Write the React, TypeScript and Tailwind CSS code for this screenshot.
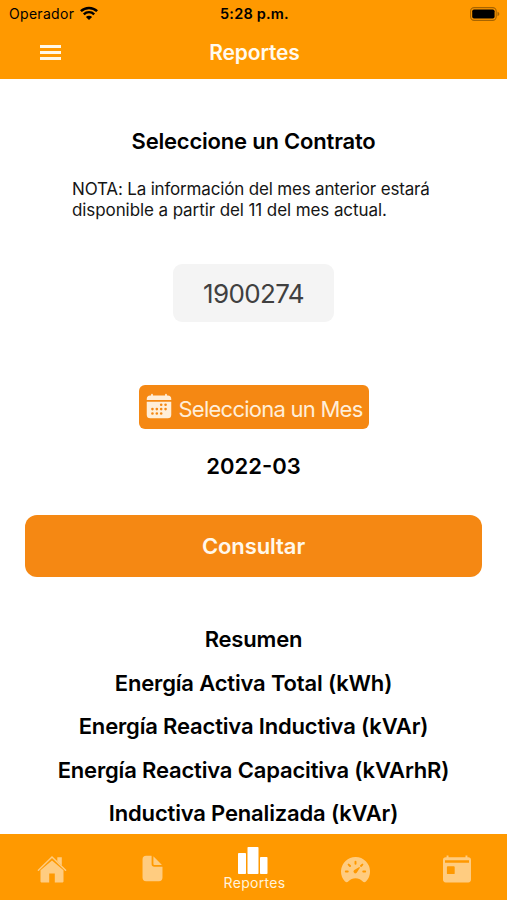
import { IoCalendar, IoDocument, IoSpeedometer } from "react-icons/io5";

// Rows listed under the "Resumen" heading
const summaryItems = [
  "Energía Activa Total (kWh)",
  "Energía Reactiva Inductiva (kVAr)",
  "Energía Reactiva Capacitiva (kVArhR)",
  "Inductiva Penalizada (kVAr)",
];

function WifiIcon() {
  return (
    <svg viewBox="0 0 20 15" className="ml-[5px] h-[15px] w-5" fill="none">
      <path d="M1.9 5.2a11.6 11.6 0 0 1 16.2 0" stroke="#000" strokeWidth="2.5" />
      <path d="M4.8 8.3a7.4 7.4 0 0 1 10.4 0" stroke="#000" strokeWidth="2.4" />
      <path d="M10 14.1 6.9 11a4.4 4.4 0 0 1 6.2 0z" fill="#000" />
    </svg>
  );
}

function BatteryIcon() {
  return (
    <svg viewBox="0 0 30 14" className="h-3.5 w-[30px]" fill="none">
      <rect x="0.6" y="0.6" width="25.6" height="12.8" rx="3.6" stroke="#a76400" strokeWidth="1.1" />
      <rect x="2.2" y="2.4" width="22.4" height="9.2" rx="1.8" fill="#000" />
      <path d="M27.5 4.8c1.1.4 1.8 1.2 1.8 2.2s-.7 1.8-1.8 2.2z" fill="#a76400" />
    </svg>
  );
}

// House with a separate roof line, a chimney and an open door
function HomeIcon() {
  return (
    <svg viewBox="0 0 30 28" className="h-7 w-[30px]" fill="currentColor">
      <path d="M3.5 15.2 15 5.4l11.5 9.8v11.4a.8.8 0 0 1-.8.8h-7.9v-8.8h-5.6v8.8H4.3a.8.8 0 0 1-.8-.8z" />
      <path d="M1.4 15.2 15 2l13.6 13.2" fill="none" stroke="currentColor" strokeWidth="1.5" strokeLinecap="round" />
      <path d="M20.3 2.2h4.5v8.2l-4.5-4.2z" />
    </svg>
  );
}

function PodiumIcon() {
  return (
    <svg viewBox="0 0 30 27" className="h-[27px] w-[30px]" fill="currentColor">
      <rect x="0" y="6" width="8" height="21" rx="0.8" />
      <rect x="9.5" y="0" width="11" height="27" rx="0.8" />
      <rect x="22" y="10" width="7.5" height="17" rx="0.8" />
    </svg>
  );
}

function TodayIcon() {
  return (
    <svg viewBox="0 0 30 28" className="h-7 w-[30px]" fill="currentColor">
      <path
        fillRule="evenodd"
        d="M4.6.6h1.9v1.6h17V.6h1.9v1.6h.8A2.8 2.8 0 0 1 29 5v19.6a2.8 2.8 0 0 1-2.8 2.8H3.8A2.8 2.8 0 0 1 1 24.6V5a2.8 2.8 0 0 1 2.8-2.8h.8zM3 5.3v2.4h24V5.3zM5.8 11.3a.9.9 0 0 0-.9.9v6a.9.9 0 0 0 .9.9h6a.9.9 0 0 0 .9-.9v-6a.9.9 0 0 0-.9-.9z"
      />
    </svg>
  );
}

function StatusBar() {
  return (
    <div className="grid h-7 grid-cols-3 items-center pl-[9px] pr-[7px] text-black">
      <div className="-mt-px flex items-center">
        <span className="text-[14px] tracking-[0.3px]">Operador</span>
        <WifiIcon />
      </div>
      <span className="text-center text-[14.5px] font-semibold tracking-[0.2px]">5:28 p.m.</span>
      <div className="-mt-px flex justify-end">
        <BatteryIcon />
      </div>
    </div>
  );
}

function Header() {
  return (
    <header className="h-[79px] shrink-0 bg-[#ff9900]">
      <StatusBar />
      <div className="grid h-[49px] grid-cols-3 items-center">
        <button className="ml-10 flex w-[21px] flex-col gap-[3px]" aria-label="Menú">
          <span className="h-[3px] bg-[#fff8e8]" />
          <span className="h-[3px] bg-[#fff8e8]" />
          <span className="h-[3px] bg-[#fff8e8]" />
        </button>
        <h1 className="pl-0.5 text-center text-[21px] font-semibold tracking-[-0.15px] text-[#fffaf0]">Reportes</h1>
      </div>
    </header>
  );
}

function TabBar() {
  return (
    <nav className="grid h-[66px] shrink-0 grid-cols-5 bg-[#ff9900] text-[#ffcc80]">
      <div className="flex items-center justify-center pl-0.5 pt-1">
        <HomeIcon />
      </div>
      <div className="flex items-center justify-center pt-0.5">
        <IoDocument className="size-[29px]" />
      </div>
      <div className="flex flex-col items-center pt-[13px] text-white">
        <PodiumIcon />
        <span className="pl-0.5 pt-px text-[14px] leading-4 tracking-[0.3px] text-[#fff3dd]">Reportes</span>
      </div>
      <div className="flex items-center justify-center pl-0.5 pt-1">
        <IoSpeedometer className="size-[31px]" />
      </div>
      <div className="flex items-center justify-center pl-0.5 pt-1">
        <TodayIcon />
      </div>
    </nav>
  );
}

export default function App() {
  return (
    <div className="flex h-[900px] w-[507px] flex-col overflow-hidden bg-white font-['Inter',sans-serif] text-black">
      <Header />

      <main className="flex min-h-0 flex-1 flex-col items-center overflow-hidden">
        <h2 className="mt-[46px] text-[22px] font-semibold leading-8 tracking-[-0.2px]">Seleccione un Contrato</h2>
        <p className="mt-[22px] w-[363px] whitespace-nowrap text-[17px] leading-[21px] tracking-[-0.17px] text-[#151515]">
          NOTA: La información del mes anterior estará
          <br />
          <span className="tracking-[-0.09px]">disponible a partir del 11 del mes actual.</span>
        </p>

        <div className="mt-[43px] flex h-[58px] w-[161px] shrink-0 items-center justify-center rounded-[9px] bg-[#f4f4f4] text-[26px] tracking-[-0.6px] text-[#404040]">
          1900274
        </div>

        <button className="mt-[63px] flex h-11 w-[230px] shrink-0 items-center whitespace-nowrap rounded-md bg-[#f58813] pl-1.5 text-[#ffeed8]">
          <IoCalendar className="-mt-0.5 mr-1.5 size-[28px] shrink-0" />
          <span className="pt-1 text-[22px] tracking-[-0.75px]">Selecciona un Mes</span>
        </button>
        <p className="mt-[21px] text-[22px] font-semibold leading-8">2022-03</p>

        <button className="mt-[33px] h-[62px] w-[457px] shrink-0 rounded-xl bg-[#f58813] text-[22px] font-semibold tracking-[-0.1px] text-[#fff8ec]">
          Consultar
        </button>

        {/* Resumen */}
        <section className="mt-[41px] flex flex-col items-center whitespace-nowrap text-[22px] font-semibold leading-[43.5px] tracking-[-0.17px]">
          <h3>Resumen</h3>
          {summaryItems.map((item) => (
            <p key={item}>{item}</p>
          ))}
        </section>
      </main>

      <TabBar />
    </div>
  );
}
